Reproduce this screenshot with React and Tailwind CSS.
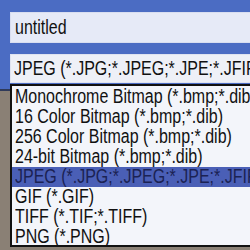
export default function App() {
  const items = [
    "Monochrome Bitmap (*.bmp;*.dib)",
    "16 Color Bitmap (*.bmp;*.dib)",
    "256 Color Bitmap (*.bmp;*.dib)",
    "24-bit Bitmap (*.bmp;*.dib)",
    "JPEG (*.JPG;*.JPEG;*.JPE;*.JFIF)",
    "GIF (*.GIF)",
    "TIFF (*.TIF;*.TIFF)",
    "PNG (*.PNG)",
  ];
  return (
    <div
      className="relative w-[250px] h-[250px] overflow-hidden bg-[#8a8075]"
      style={{ fontFamily: "'Liberation Sans', Arial, sans-serif" }}
    >
      <div className="h-[91px] bg-[#4b6cc3] border-b-2 border-[#2f3a5a] pt-[12px] pl-[10px] flex flex-col gap-[11px]">
        <div className="h-[31px] w-[260px] bg-[#e6eaf7] border border-[#d9def0] flex items-center pl-[4px] text-[19.5px] text-[#111] whitespace-nowrap">
          <span className="inline-block origin-left scale-x-[0.82]">untitled</span>
        </div>
        <div className="h-[29px] w-[260px] bg-[#eef0f7] border border-[#dfe3f0] flex items-center pl-[3px] text-[19.5px] text-[#111] whitespace-nowrap">
          <span className="inline-block origin-left scale-x-[0.82]">JPEG (*.JPG;*.JPEG;*.JPE;*.JFIF)</span>
        </div>
      </div>
      <div className="absolute left-[10px] top-[84px] w-[260px] h-[163px] bg-[#f3f5fa] border-2 border-[#111] border-r-0 pt-[1px]">
        {items.map((t, i) => (
          <div
            key={i}
            className={
              "h-[20px] flex items-center pl-[3px] text-[19.5px] whitespace-nowrap leading-none " +
              (i === 4 ? "bg-[#4a5fb6] text-[#1b2253]" : "text-[#111]")
            }
          >
            <span className="inline-block origin-left scale-x-[0.82]">{t}</span>
          </div>
        ))}
      </div>
    </div>
  );
}
